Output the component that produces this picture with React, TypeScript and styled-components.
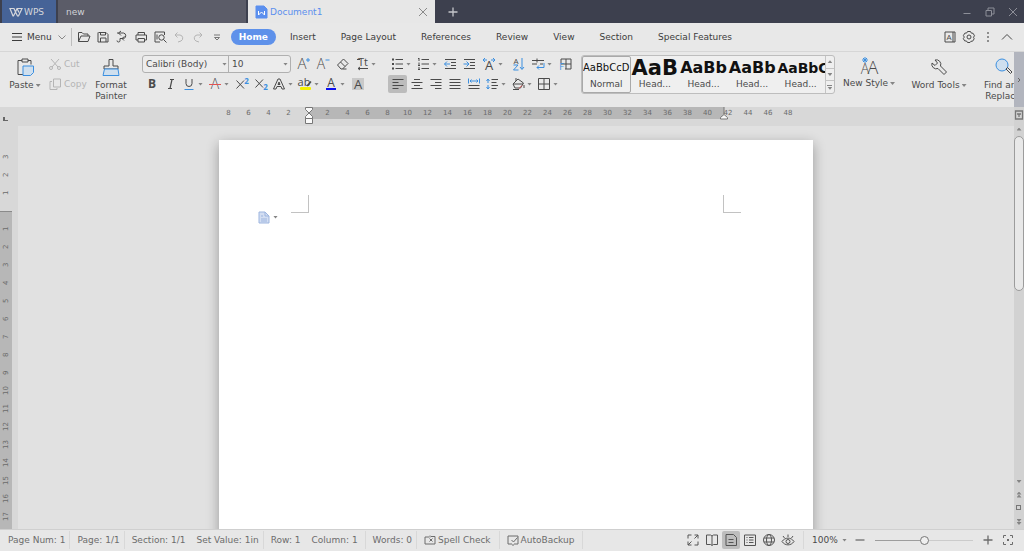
import React from "react";
import styled, { createGlobalStyle, css } from "styled-components";

const UI_FONT = `"DejaVu Sans", sans-serif`;

const GlobalStyle = createGlobalStyle`
  * { box-sizing: border-box; }
  html, body, #root { height: 100%; }
  body {
    margin: 0;
    overflow: hidden;
    background: #e1e1e1;
    color: #4a4a4a;
    font: 9px/12px ${UI_FONT};
  }
  button, select, input { font: inherit; color: inherit; }
`;

/* ---------- shared parts ---------- */

const Window = styled.div`
  display: flex;
  flex-direction: column;
  height: 100vh;
  overflow: hidden;
`;

const PlainButton = styled.button`
  display: inline-flex;
  align-items: center;
  justify-content: center;
  flex: none;
  margin: 0;
  padding: 0;
  border: 0;
  background: none;
  white-space: nowrap;
`;

const Caret = styled.span<{ $up?: boolean }>`
  flex: none;
  width: 5px;
  height: 3px;
  background: #858585;
  clip-path: ${(p) => (p.$up ? "polygon(50% 0, 100% 100%, 0 100%)" : "polygon(0 0, 100% 0, 50% 100%)")};
`;

const Glyph = styled.svg`
  display: block;
  flex: none;
  width: 16px;
  height: 16px;
  overflow: visible;
  fill: none;
  stroke: currentColor;
  stroke-width: 1;

  text {
    stroke: none;
    fill: currentColor;
    text-anchor: middle;
    font-family: "Open Sans", sans-serif;
  }
  .blue { stroke: #3b8fe0; }
  .tint { stroke: #3b8fe0; fill: #cfdfee; }
  text.blue { stroke: none; fill: #3b8fe0; }
  .solid { fill: currentColor; stroke: none; }
`;

const Icon = ({ children }: { children: React.ReactNode }) => (
  <Glyph viewBox="0 0 16 16" aria-hidden="true">
    {children}
  </Glyph>
);

/* ---------- title bar ---------- */

const TitleBar = styled.header`
  display: flex;
  flex: none;
  height: 23px;
  padding-left: 2px;
  background: #3d404e;
  color: #d6d7db;
`;

const BrandTab = styled(PlainButton)`
  justify-content: flex-start;
  width: 54px;
  margin-right: 2px;
  padding-left: 6px;
  background: #466397;
`;

const FileTab = styled.div<{ $active?: boolean }>`
  display: flex;
  align-items: center;
  gap: 1px;
  width: ${(p) => (p.$active ? 187 : 188)}px;
  margin-right: 2px;
  padding: 0 4px 0 ${(p) => (p.$active ? 5 : 8)}px;
  background: ${(p) => (p.$active ? "#e7e7e7" : "#5b5c68")};
  color: ${(p) => (p.$active ? "#5b8fee" : "#d0d1d6")};
`;

const FileName = styled.span`
  flex: 1;
`;

const CloseTab = styled(PlainButton)`
  color: #8a8a8a;
`;

const WindowControls = styled.div`
  display: flex;
  margin-left: auto;
  color: #8d8f98;
`;

const TitleButton = styled(PlainButton)`
  width: 23px;
`;

const NewTabButton = styled(PlainButton)`
  width: 32px;
  color: #c4c5ca;
`;

/* ---------- menu row ---------- */

const MenuRow = styled.nav`
  display: flex;
  align-items: center;
  flex: none;
  height: 29px;
  padding: 0 8px 0 9px;
  border-bottom: 1px solid #d6d6d6;
  background: #e8e8e8;
`;

const MenuButton = styled(PlainButton)`
  gap: 2px;
  margin-right: 1px;
  color: #3c3c3c;
`;

const MenuDivider = styled.span`
  width: 1px;
  height: 18px;
  margin-right: 3px;
  background: #bdbdbd;
`;

const QuickButton = styled(PlainButton)`
  width: 19px;
  height: 18px;
  &:disabled { color: #b4b4b4; }
`;

const TabList = styled.div`
  display: flex;
  align-items: center;
  gap: 1px;
  margin-left: 4px;
`;

const RibbonTab = styled(PlainButton)<{ $active?: boolean }>`
  height: 16px;
  padding: 0 12px;
  color: #3c3c3c;
  ${(p) =>
    p.$active &&
    css`
      padding: 0 8px;
      margin-right: 1px;
      border-radius: 8px;
      background: #5e91ea;
      color: #fff;
      font-weight: bold;
    `}
`;

const MenuTools = styled.div`
  display: flex;
  margin-left: auto;
`;

/* ---------- ribbon ---------- */

const RibbonBar = styled.section`
  display: flex;
  flex: none;
  height: 55px;
  background: #e8e8e8;
`;

const RibbonContent = styled.div`
  display: flex;
  flex: 1;
  min-width: 0;
  overflow: hidden;
  padding: 3px 0 0 6px;
`;

const ScrollRight = styled(PlainButton)`
  width: 10px;
  background: #b2b5be;
`;

const BigButton = styled(PlainButton)<{ $w: number; $low?: boolean }>`
  flex-direction: column;
  justify-content: flex-start;
  gap: ${(p) => (p.$low ? 3 : 2)}px;
  width: ${(p) => p.$w}px;
  padding-top: ${(p) => (p.$low ? 2 : 1)}px;
  line-height: 11px;
`;

const BigGlyph = styled(Glyph)`
  width: 20px;
  height: 20px;
`;

const LabelLine = styled.span`
  display: flex;
  align-items: center;
  gap: 2px;
`;

const ClipColumn = styled.div`
  display: flex;
  flex: none;
  flex-direction: column;
  gap: 2px;
  width: 42px;
  margin-left: 3px;
`;

const ClipButton = styled(PlainButton)`
  justify-content: flex-start;
  gap: 1px;
  height: 18px;
  &:disabled { color: #b5b5b5; }
`;

const ToolGroup = styled.div<{ $mr: number; $ml?: number }>`
  display: flex;
  flex: none;
  flex-direction: column;
  gap: 2px;
  margin-left: ${(p) => p.$ml ?? 0}px;
  margin-right: ${(p) => p.$mr}px;
`;

const ToolRow = styled.div<{ $gap?: number }>`
  display: flex;
  align-items: center;
  gap: ${(p) => p.$gap ?? 0}px;
  height: 18px;
`;

const Cluster = styled.div`
  display: flex;
`;

const ToolButton = styled(PlainButton)<{ $split?: boolean; $on?: boolean }>`
  justify-content: ${(p) => (p.$split ? "flex-start" : "center")};
  gap: 1px;
  width: ${(p) => (p.$split ? 26 : 19)}px;
  height: 18px;
  padding-left: ${(p) => (p.$split ? 1 : 0)}px;
  border-radius: 2px;
  background: ${(p) => (p.$on ? "#bcbcbc" : "none")};
`;

const ComboPair = styled.div`
  display: flex;
  width: 149px;
  height: 18px;
  margin-right: 1px;
  border: 1px solid #b0b0b0;
  border-radius: 3px;
  background: #ececec;
`;

const Combo = styled.label<{ $w: number; $line?: boolean }>`
  display: flex;
  align-items: center;
  width: ${(p) => p.$w}px;
  padding-right: ${(p) => (p.$line ? 1 : 2)}px;
  border-right: ${(p) => (p.$line ? "1px solid #b0b0b0" : "0")};
`;

const Select = styled.select`
  appearance: none;
  flex: 1;
  min-width: 0;
  padding: 0 0 0 3px;
  border: 0;
  background: none;
`;

const Gallery = styled.div`
  display: flex;
  flex: none;
  width: 254px;
  height: 39px;
  margin-right: 6px;
  border: 1px solid #bdbdbd;
  border-radius: 3px;
  background: #efefef;
`;

const StyleItem = styled(PlainButton)<{ $on?: boolean }>`
  flex: 1 1 0;
  flex-direction: column;
  min-width: 0;
  overflow: hidden;
  outline: ${(p) => (p.$on ? "1px solid #a9a9a9" : "none")};
  outline-offset: -1px;
  border-radius: 2px;
`;

const Sample = styled.span<{ $size: number; $bold?: boolean }>`
  display: flex;
  align-items: center;
  align-self: stretch;
  height: 22px;
  padding-left: 1px;
  overflow: hidden;
  color: #111;
  font-size: ${(p) => p.$size}px;
  font-weight: ${(p) => (p.$bold ? "bold" : "normal")};
  line-height: 22px;
`;

const SampleName = styled.span`
  height: 14px;
  line-height: 11px;
`;

const GalleryScroll = styled.div`
  display: flex;
  flex-direction: column;
  width: 9px;
  border-left: 1px solid #c4c4c4;
`;

const GalleryButton = styled(PlainButton)`
  flex: 1;
  flex-direction: column;
  gap: 1px;
  & + & { border-top: 1px solid #c4c4c4; }
`;

const Bar = styled.span`
  width: 5px;
  height: 1px;
  background: #858585;
`;

/* ---------- workspace ---------- */

const Workspace = styled.main`
  display: grid;
  grid-template-columns: 18px 1fr 10px;
  grid-template-rows: 19px 1fr;
  flex: 1;
  min-height: 0;
  background: #d8d8d8;
`;

const Corner = styled.div`
  display: flex;
  align-items: flex-end;
  padding: 0 0 5px 3px;
`;

const TabStop = styled.span`
  width: 5px;
  height: 4px;
  border: solid #666;
  border-width: 0 0 1px 2px;
`;

const HRuler = styled.div`
  display: flex;
  justify-content: center;
  color: #6a6a6a;
  font-size: 7px;
  line-height: 12px;
`;

const HSection = styled.div<{ $w: number; $pad?: number; $dark?: boolean }>`
  position: relative;
  display: flex;
  flex: none;
  width: ${(p) => p.$w}px;
  height: 12px;
  padding-left: ${(p) => p.$pad ?? 0}px;
  background: ${(p) => (p.$dark ? "#b7b7b7" : "none")};
`;

const HMark = styled.span<{ $left?: boolean }>`
  flex: none;
  width: 20px;
  text-align: ${(p) => (p.$left ? "left" : "center")};
`;

const IndentMarks = styled.svg<{ $right?: boolean }>`
  position: absolute;
  top: 0;
  ${(p) => (p.$right ? "right: -4px;" : "left: -4px;")}
  width: 8px;
  height: 18px;
  fill: #fafafa;
  stroke: #777;
`;

const VRuler = styled.div`
  display: flex;
  flex-direction: column;
  min-height: 0;
  overflow: hidden;
  color: #6a6a6a;
  font-size: 7px;
  line-height: 12px;
`;

const VSection = styled.div<{ $dark?: boolean }>`
  display: flex;
  flex: ${(p) => (p.$dark ? "1 0 auto" : "none")};
  flex-direction: column;
  width: 12px;
  padding-top: ${(p) => (p.$dark ? 8 : 22)}px;
  padding-bottom: ${(p) => (p.$dark ? 0 : 9)}px;
  border-top: ${(p) => (p.$dark ? "1px solid #8a8a8a" : "0")};
  background: ${(p) => (p.$dark ? "#b7b7b7" : "none")};
`;

const VMark = styled.span`
  flex: none;
  width: 12px;
  height: 18px;
  text-align: center;
  writing-mode: vertical-rl;
  transform: rotate(180deg);
`;

const Canvas = styled.div`
  display: flex;
  justify-content: center;
  min-height: 0;
  overflow: hidden;
  padding-top: 14px;
  background: #e1e1e1;
`;

const Page = styled.article`
  position: relative;
  display: flex;
  justify-content: space-between;
  flex: none;
  width: 594px;
  height: 840px;
  padding: 55px 72px 0 72px;
  background: #fff;
  box-shadow: 0 4px 12px rgba(0, 0, 0, 0.32);
`;

const CropMark = styled.span<{ $side: "left" | "right" }>`
  width: 18px;
  height: 18px;
  border: solid #c2c2c2;
  border-width: ${(p) => (p.$side === "left" ? "0 1px 1px 0" : "0 0 1px 1px")};
`;

const PasteOptions = styled(PlainButton)`
  position: absolute;
  top: 69px;
  left: 37px;
  gap: 1px;
`;

const ScrollColumn = styled.div`
  display: flex;
  flex-direction: column;
  align-items: center;
  grid-column: 3;
  grid-row: 1 / 3;
  background: #d2d2d2;
  color: #777;
`;

const ScrollButton = styled(PlainButton)<{ $h: number }>`
  flex-direction: column;
  width: 10px;
  height: ${(p) => p.$h}px;
`;

const Thumb = styled.div`
  flex: 0 0 155px;
  width: 10px;
  border: 1px solid #9c9c9c;
  border-radius: 5px;
  background: #e8e8e8;
`;

const ScrollFiller = styled.div`
  flex: 1;
`;

/* ---------- status bar ---------- */

const StatusBar = styled.footer`
  display: flex;
  align-items: center;
  flex: none;
  height: 22px;
  padding: 0 7px 1px 1px;
  border-top: 1px solid #cfcfcf;
  background: #e7e7e7;
  color: #6c6c6c;
`;

const StatusCell = styled.div<{ $tight?: boolean; $tool?: boolean }>`
  display: flex;
  align-items: center;
  flex: none;
  gap: 11px;
  height: 18px;
  padding: 0 ${(p) => (p.$tight ? 4 : p.$tool ? 8 : 7)}px 0 ${(p) => (p.$tool ? 5 : 7)}px;
  border-right: 1px solid #d8d8d8;
  white-space: nowrap;
`;

const ViewGroup = styled.div`
  display: flex;
  gap: 1px;
  margin-left: auto;
  padding-right: 6px;
  border-right: 1px solid #d8d8d8;
  color: #555;
`;

const ViewButton = styled(PlainButton)<{ $on?: boolean }>`
  width: 18px;
  height: 18px;
  border-radius: 2px;
  background: ${(p) => (p.$on ? "#bdbdbd" : "none")};
`;

const ZoomSelect = styled.label`
  display: flex;
  align-items: center;
  width: 47px;
  padding-right: 4px;
  padding-left: 5px;
  color: #4a4a4a;
`;

const ZoomTools = styled.div`
  display: flex;
  align-items: center;
  gap: 2px;
`;

const Slider = styled.input`
  appearance: none;
  width: 98px;
  height: 11px;
  margin: 0 4px;
  background: linear-gradient(90deg, #9d9d9d 50%, #cbcbcb 50%) center / 100% 1px no-repeat;
  &::-webkit-slider-thumb {
    appearance: none;
    width: 9px;
    height: 9px;
    border: 1px solid #777;
    border-radius: 50%;
    background: #efefef;
  }
`;

/* ---------- icons ---------- */

const icons = {
  wps: <path d="M2 4.500h4l1.500 3.500 1.500-3.500h5L10.500 12h-1l-2-4-2 4h-.5zM9 4.500l2 4" strokeWidth="1.200" />,
  doc: (
    <>
      <path d="M3 2h8l3 3v9H3z" fill="#5b8fee" stroke="#5b8fee" />
      <path d="M5.500 7v4l3-3 3 3V7" stroke="#fff" />
    </>
  ),
  close: <path d="M4 4l8 8M12 4l-8 8" />,
  plus: <path d="M3.500 8h9M8 3.500v9" strokeWidth="1.300" />,
  minus: <path d="M3.500 8h9" strokeWidth="1.300" />,
  minimise: <path d="M4.500 9.500h7" />,
  restore: <path d="M4 6.500h5.500V12H4zM6 6V4h6v6h-2" />,
  burger: <path d="M3 4.500h10M3 8h10M3 11.500h10" />,
  chevronDown: <path d="M4.500 6.500L8 10l3.500-3.500" stroke="#888" />,
  chevronUp: <path d="M3 10.500l5-5 5 5" />,
  folder: <path d="M2.500 12.500v-9h3.500l1.500 1.500h4.500v2M2.500 12.500L5 7h9l-2 5.500z" />,
  save: <path d="M3.500 3.500h7.500l2 2v7.500h-10v-9.500M5.500 3.500v2.500h5V3.500M5.500 13V9h5.500v4" />,
  exportDoc: (
    <path d="M3 4h6.500a2.800 2.800 0 0 1 0 5.500H8M7 2l-2.500 2L7 6.500M10.500 7.500L8 9.500l2 2M8 9.500H6v2a1.500 1.500 0 0 1-3 0" />
  ),
  print: <path d="M5 6V3.500h6.500V6M5 11H3V6h10.500v5h-2M5 9.500h6.500v3.500H5z" />,
  preview: (
    <>
      <path d="M12.500 6V3H3v10h5" />
      <circle cx="9.500" cy="8.500" r="2.700" />
      <path d="M11.500 10.500l3 3M5 5.500v5" />
    </>
  ),
  undo: <path d="M6.500 3.500L4 6l2.500 2.500M4 6h5a3.200 3.200 0 0 1 1 6l-3 1" />,
  redo: <path d="M9.500 3.500L12 6 9.500 8.500M12 6H7a3.200 3.200 0 0 0-1 6l3 1" />,
  more: <path d="M5 6h6M5.500 8.500h5L8 11z" stroke="#777" />,
  dictionary: (
    <>
      <path d="M3 3h10v10H3zM11 3v10" />
      <text x="7" y="11" fontSize="8">A</text>
    </>
  ),
  gear: (
    <>
      <circle cx="8" cy="8" r="2" />
      <path d="M6.500 2.500h3l.8 1.600 1.800.2 1.400 2.500-1 1.400.7 1.600-1.600 2.400-1.700.1L9 13.500H6.500l-1-1.500-1.800-.1-1.400-2.300 1-1.500-.9-1.600 1.500-2.400 1.800-.1z" />
    </>
  ),
  dots: (
    <g className="solid">
      <rect x="7.250" y="3.250" width="1.500" height="1.500" />
      <rect x="7.250" y="7.250" width="1.500" height="1.500" />
      <rect x="7.250" y="11.250" width="1.500" height="1.500" />
    </g>
  ),
  cut: (
    <>
      <path d="M4 3l7 8M12 3l-7 8" />
      <circle cx="4" cy="12" r="1.500" />
      <circle cx="12" cy="12" r="1.500" />
    </>
  ),
  copy: <path d="M6.500 3h7v8h-7zM5 5.500H3v8h7v-1.500" />,
  growFont: (
    <>
      <text x="7" y="13" fontSize="15" fontWeight="300">A</text>
      <path className="blue" d="M11 4h4M13 2v4" />
    </>
  ),
  shrinkFont: (
    <>
      <text x="6" y="13" fontSize="14" fontWeight="300">A</text>
      <path className="blue" d="M10.500 4h4" />
    </>
  ),
  eraser: <path d="M2.500 9L8.500 3l4.500 4.500-5.500 5.500H6zM5.500 6l4.500 4.500M7.500 13h4" />,
  phonetic: (
    <>
      <text x="9" y="10" fontSize="11">Tt</text>
      <path d="M3 3.500h3M4 12.500h10M6 11l-2 1.500L6 14" />
    </>
  ),
  bold: <text x="8" y="12" fontSize="12" fontWeight="700">B</text>,
  italic: <path d="M7 3.500h4M5 12.500h4M9 3.500l-2 9" strokeWidth="1.200" />,
  underline: (
    <>
      <path d="M5 3v4.500a3 3 0 0 0 6 0V3" />
      <path className="blue" d="M3.500 13.500h9" />
    </>
  ),
  strike: (
    <>
      <text x="8" y="13" fontSize="14" fontWeight="300">A</text>
      <path d="M2 8.500h12" stroke="#e05252" />
    </>
  ),
  superscript: (
    <>
      <path d="M2.500 4.500l7.500 8M10 4.500l-7.500 8" />
      <text className="blue" x="12.500" y="7.500" fontSize="8" fontWeight="700">2</text>
    </>
  ),
  subscript: (
    <>
      <path d="M2.500 3.500l7.500 8M10 3.500l-7.500 8" />
      <text className="blue" x="12.500" y="14" fontSize="8" fontWeight="700">2</text>
    </>
  ),
  textEffect: <path d="M2.500 13L7 3h2l4.500 10h-2.500l-1-2.500H6L5 13zM7 8.500h2L8 6z" />,
  highlight: (
    <>
      <text x="7" y="10" fontSize="11">ab</text>
      <path d="M10 10l4-4.500" strokeWidth="1.500" />
      <rect x="3" y="11" width="11" height="3" rx="1" fill="#f4f000" stroke="none" />
    </>
  ),
  fontColor: (
    <>
      <text x="8" y="10.500" fontSize="12">A</text>
      <rect x="3" y="12" width="10" height="2" fill="#0c10f0" stroke="none" />
    </>
  ),
  shade: (
    <>
      <rect x="2" y="2" width="12" height="12" fill="#c9c9c9" stroke="none" />
      <text x="8" y="13" fontSize="13">A</text>
    </>
  ),
  bullets: (
    <>
      <path d="M6.500 3.500h7.500M6.500 8h7.500M6.500 12.500h7.500" />
      <path d="M3 3.500h2M3 8h2M3 12.500h2" strokeWidth="2" />
    </>
  ),
  numbers: (
    <>
      <path d="M6.500 3.500h7.500M6.500 8h7.500M6.500 12.500h7.500" />
      <path d="M4 2v3M4 6.500v3M4 11v3M3 2.500h1M3 9.500h2M3 13.500h2" />
    </>
  ),
  outdent: (
    <>
      <path d="M3 3.500h11M9 6.500h5M9 9.500h5M3 12.500h11" />
      <path className="blue" d="M8 8H2.500M5 5.500L2.500 8 5 10.500" />
    </>
  ),
  indent: (
    <>
      <path d="M3 3.500h11M9 6.500h5M9 9.500h5M3 12.500h11" />
      <path className="blue" d="M2.500 8H8M5.500 5.500L8 8l-2.500 2.500" />
    </>
  ),
  charScale: (
    <>
      <text x="8" y="14" fontSize="13">A</text>
      <path className="blue" d="M2 4h4M10 4h4M4 2L2 4l2 2M12 2l2 2-2 2" />
    </>
  ),
  sort: (
    <>
      <text x="6" y="7.500" fontSize="8">A</text>
      <path className="blue" d="M3.500 9h4.500l-4.500 5h5M12 2v11M10 11l2 2.500 2-2.500" />
    </>
  ),
  marks: (
    <>
      <path d="M2 4.500h12M2 8h5M10 8h3M7 2.500v4" />
      <path className="blue" d="M14 7v4.500H7M9 9.500l-2 2 2 2" />
    </>
  ),
  frame: (
    <>
      <path d="M4 7V3h10v10H8M4 8h10M9 3v10" />
      <text className="blue" x="4.500" y="14" fontSize="9">F</text>
    </>
  ),
  left: <path d="M2.500 3.500h11M2.500 6.500h6M2.500 9.500h11M2.500 12.500h6" />,
  center: <path d="M5 3.500h6M2.500 6.500h11M5 9.500h6M2.500 12.500h11" />,
  right: <path d="M2.500 3.500h11M7 6.500h6.500M2.500 9.500h11M7 12.500h6.500" />,
  justify: <path d="M2.500 3.500h11M2.500 6.500h11M2.500 9.500h11M2.500 12.500h11" />,
  distribute: (
    <>
      <path d="M2.500 9.500h11M2.500 12.500h11" />
      <path className="blue" d="M2.500 2.500v5M13.500 2.500v5M4 5h8M5.500 3.500L4 5l1.500 1.500M10.500 3.500L12 5l-1.500 1.500" />
    </>
  ),
  spacing: (
    <>
      <path d="M7.500 3.500h6.500M7.500 6.500h5M7.500 9.500h6.500M7.500 12.500h5" />
      <path className="blue" d="M4 3v4M4 9v4M2.500 5L4 3l1.500 2M2.500 11L4 13l1.500-2" />
    </>
  ),
  bucket: (
    <>
      <path d="M3 8l5-5 5.500 4-3 5H5zM3 8h10M6 5V2M14 9v3" />
      <path d="M3 13.500h6" />
      <path d="M9 12.500l3-3" stroke="#e05252" />
    </>
  ),
  borders: <path d="M2.500 2.500h11v11h-11zM8 2.500v11M2.500 8h11" />,
  pasteTag: (
    <>
      <path d="M3 3h6l4 4v7H3z" fill="#d3def2" stroke="#9db5df" />
      <path d="M9 3v4h4M5 10h6M5 12h6M5 7h2" stroke="#9db5df" />
    </>
  ),
  spell: <path d="M7 5H3v7h10V4.500H9M8 3.500v2M7.500 6.500l3 3M10.500 6.500l-3 3" />,
  backup: <path d="M7 12H3V4h10v8H9M8 12v2M6.500 8l2 2 4-4.500" />,
  expand: <path d="M9.500 3H13v3.500M13 3L9.500 6.500M3 6.500V3h3.500M3 9.500V13h3.500M3 13l3.500-3.500M13 9.500V13H9.500" />,
  book: <path d="M8 4v9M8 4L6.500 3h-4v9.500h4L8 13.500l1.500-1h4V3h-4z" />,
  pageView: <path d="M3 2.500h7.500l3 3v8H3zM5.500 7.500h5M5.500 10.500h5" />,
  outline: <path d="M2.500 3h11v10.500h-11zM4.500 5.500h1M7 5.500h4.500M4.500 8h1M7 8h4.500M4.500 10.500h1M7 10.500h4.500" />,
  globe: (
    <>
      <circle cx="8" cy="8" r="5.500" />
      <ellipse cx="8" cy="8" rx="2.500" ry="5.500" />
      <path d="M3 6h10M3 10h10" />
    </>
  ),
  eye: (
    <>
      <path d="M2 9.500c3-4.500 9-4.500 12 0-3 4.500-9 4.500-12 0zM8 5V2.500M4.500 6L3 4M11.500 6L13 4" />
      <circle cx="8" cy="9.500" r="2" />
    </>
  ),
  fit: (
    <>
      <path d="M3.500 6V3.500H6M10 3.500h2.500V6M12.500 10v2.500H10M6 12.500H3.500V10" />
      <rect className="solid" x="7" y="7" width="2" height="2" />
    </>
  ),
  ribbonNext: <path d="M7 6l2 2-2 2" stroke="#666" />,
  rulerToggle: <path d="M4.500 4h7v8h-7zM6 7h4M8 7v3" strokeWidth="1.300" />,
};

type IconName = keyof typeof icons;

/* ---------- data ---------- */

type Tool = { icon: IconName; label: string; split?: boolean; on?: boolean };

const quickTools: { icon: IconName; label: string; off?: boolean }[] = [
  { icon: "folder", label: "Open" },
  { icon: "save", label: "Save" },
  { icon: "exportDoc", label: "Export to PDF" },
  { icon: "print", label: "Print" },
  { icon: "preview", label: "Print Preview" },
  { icon: "undo", label: "Undo", off: true },
  { icon: "redo", label: "Redo", off: true },
  { icon: "more", label: "Customize" },
];

const ribbonTabs = ["Home", "Insert", "Page Layout", "References", "Review", "View", "Section", "Special Features"];

const fontRow1: Tool[] = [
  { icon: "growFont", label: "Grow Font" },
  { icon: "shrinkFont", label: "Shrink Font" },
  { icon: "eraser", label: "Clear Formatting" },
  { icon: "phonetic", label: "Phonetic Guide", split: true },
];

const fontRow2: Tool[] = [
  { icon: "bold", label: "Bold" },
  { icon: "italic", label: "Italic" },
  { icon: "underline", label: "Underline", split: true },
  { icon: "strike", label: "Strikethrough", split: true },
  { icon: "superscript", label: "Superscript" },
  { icon: "subscript", label: "Subscript" },
  { icon: "textEffect", label: "Text Effect", split: true },
  { icon: "highlight", label: "Highlight", split: true },
  { icon: "fontColor", label: "Font Color", split: true },
  { icon: "shade", label: "Character Shading" },
];

const paragraphClusters: Tool[][] = [
  [
    { icon: "bullets", label: "Bullets", split: true },
    { icon: "numbers", label: "Numbering", split: true },
    { icon: "outdent", label: "Decrease Indent" },
    { icon: "indent", label: "Increase Indent" },
  ],
  [{ icon: "charScale", label: "Character Scaling", split: true }],
  [{ icon: "sort", label: "Sort" }],
  [
    { icon: "marks", label: "Show Marks", split: true },
    { icon: "frame", label: "Frame" },
  ],
];

const paragraphRow2: Tool[] = [
  { icon: "left", label: "Align Left", on: true },
  { icon: "center", label: "Center" },
  { icon: "right", label: "Align Right" },
  { icon: "justify", label: "Justify" },
  { icon: "distribute", label: "Distribute" },
  { icon: "spacing", label: "Line Spacing", split: true },
  { icon: "bucket", label: "Shading", split: true },
  { icon: "borders", label: "Borders", split: true },
];

const styleSamples = [
  { name: "Normal", text: "AaBbCcD", size: 10 },
  { name: "Head...", text: "AaB", size: 21, bold: true },
  { name: "Head...", text: "AaBb", size: 16, bold: true },
  { name: "Head...", text: "AaBb", size: 16, bold: true },
  { name: "Head...", text: "AaBbC", size: 14, bold: true },
];

const views: { icon: IconName; label: string; on?: boolean }[] = [
  { icon: "expand", label: "Full Screen" },
  { icon: "book", label: "Reading Layout" },
  { icon: "pageView", label: "Print Layout", on: true },
  { icon: "outline", label: "Outline" },
  { icon: "globe", label: "Web Layout" },
  { icon: "eye", label: "Eye Protection" },
];

const evens = (from: number, to: number) =>
  Array.from({ length: Math.abs(to - from) / 2 + 1 }, (_, i) => from + (to > from ? 2 * i : -2 * i));

const Tools = ({ items }: { items: Tool[] }) => (
  <>
    {items.map((t) => (
      <ToolButton key={t.label} aria-label={t.label} $split={t.split} $on={t.on}>
        <Icon>{icons[t.icon]}</Icon>
        {t.split && <Caret />}
      </ToolButton>
    ))}
  </>
);

/* ---------- app ---------- */

export default function App() {
  return (
    <Window>
      <GlobalStyle />
      <TitleBar>
        <BrandTab>
          <Icon>{icons.wps}</Icon>
          WPS
        </BrandTab>
        <FileTab>
          <FileName>new</FileName>
        </FileTab>
        <FileTab $active>
          <Icon>{icons.doc}</Icon>
          <FileName>Document1</FileName>
          <CloseTab aria-label="Close tab">
            <Icon>{icons.close}</Icon>
          </CloseTab>
        </FileTab>
        <NewTabButton aria-label="New tab">
          <Icon>{icons.plus}</Icon>
        </NewTabButton>
        <WindowControls>
          <TitleButton aria-label="Minimize"><Icon>{icons.minimise}</Icon></TitleButton>
          <TitleButton aria-label="Restore"><Icon>{icons.restore}</Icon></TitleButton>
          <TitleButton aria-label="Close"><Icon>{icons.close}</Icon></TitleButton>
        </WindowControls>
      </TitleBar>

      <MenuRow>
        <MenuButton>
          <Icon>{icons.burger}</Icon>
          Menu
          <Icon>{icons.chevronDown}</Icon>
        </MenuButton>
        <MenuDivider />
        {quickTools.map((t) => (
          <QuickButton key={t.label} aria-label={t.label} disabled={t.off}>
            <Icon>{icons[t.icon]}</Icon>
          </QuickButton>
        ))}
        <TabList>
          {ribbonTabs.map((t) => (
            <RibbonTab key={t} $active={t === "Home"}>{t}</RibbonTab>
          ))}
        </TabList>
        <MenuTools>
          <QuickButton aria-label="Dictionary"><Icon>{icons.dictionary}</Icon></QuickButton>
          <QuickButton aria-label="Settings"><Icon>{icons.gear}</Icon></QuickButton>
          <QuickButton aria-label="More"><Icon>{icons.dots}</Icon></QuickButton>
          <QuickButton aria-label="Collapse ribbon"><Icon>{icons.chevronUp}</Icon></QuickButton>
        </MenuTools>
      </MenuRow>

      <RibbonBar>
        <RibbonContent>
          <BigButton $w={38} $low>
            <BigGlyph viewBox="0 0 20 20" aria-hidden="true">
              <path d="M7 3.500H3v14h5M13 3.500h3v4M7 2h6v3H7z" />
              <path className="tint" d="M8 9h10.500v6.500l-3 3H8z" />
            </BigGlyph>
            <LabelLine>Paste<Caret /></LabelLine>
          </BigButton>
          <ClipColumn>
            <ClipButton disabled><Icon>{icons.cut}</Icon>Cut</ClipButton>
            <ClipButton disabled><Icon>{icons.copy}</Icon>Copy</ClipButton>
          </ClipColumn>
          <BigButton $w={44} $low>
            <BigGlyph viewBox="0 0 20 20" aria-hidden="true">
              <path d="M8 9V2.500h4V9h5v3H3V9z" />
              <path className="tint" d="M3.500 12h13.500l1 6.500H2z" />
            </BigGlyph>
            <span>Format<br />Painter</span>
          </BigButton>

          <ToolGroup $ml={9} $mr={9}>
            <ToolRow $gap={1}>
              <ComboPair>
                <Combo $w={86} $line>
                  <Select aria-label="Font"><option>Calibri (Body)</option></Select>
                  <Caret />
                </Combo>
                <Combo $w={61}>
                  <Select aria-label="Font size"><option>10</option></Select>
                  <Caret />
                </Combo>
              </ComboPair>
              <Tools items={fontRow1} />
            </ToolRow>
            <ToolRow>
              <Tools items={fontRow2} />
            </ToolRow>
          </ToolGroup>

          <ToolGroup $mr={7}>
            <ToolRow $gap={2}>
              {paragraphClusters.map((c) => (
                <Cluster key={c[0].label}>
                  <Tools items={c} />
                </Cluster>
              ))}
            </ToolRow>
            <ToolRow>
              <Tools items={paragraphRow2} />
            </ToolRow>
          </ToolGroup>

          <Gallery>
            {styleSamples.map((s, i) => (
              <StyleItem key={i} $on={i === 0}>
                <Sample $size={s.size} $bold={s.bold}>{s.text}</Sample>
                <SampleName>{s.name}</SampleName>
              </StyleItem>
            ))}
            <GalleryScroll>
              <GalleryButton aria-label="Previous styles"><Caret $up /></GalleryButton>
              <GalleryButton aria-label="Next styles"><Caret /></GalleryButton>
              <GalleryButton aria-label="All styles"><Bar /><Caret /></GalleryButton>
            </GalleryScroll>
          </Gallery>

          <BigButton $w={56}>
            <BigGlyph viewBox="0 0 20 20" aria-hidden="true">
              <text x="6" y="18" fontSize="14" fontWeight="300">A</text>
              <text x="14" y="18" fontSize="18" fontWeight="300">A</text>
              <path className="blue" d="M6 1v6M3 4h6M4 2l4 4M8 2L4 6" />
            </BigGlyph>
            <LabelLine>New Style<Caret /></LabelLine>
          </BigButton>
          <BigButton $w={84} $low>
            <BigGlyph viewBox="0 0 20 20" aria-hidden="true">
              <path d="M6 3a4.500 4.500 0 0 1 5.500 6l6 6-2.500 2.500-6-6A4.500 4.500 0 0 1 3 6l3 2.500L8.500 6z" />
            </BigGlyph>
            <LabelLine>Word Tools<Caret /></LabelLine>
          </BigButton>
          <BigButton $w={44} $low>
            <BigGlyph viewBox="0 0 20 20" aria-hidden="true">
              <circle className="tint" cx="9" cy="8" r="6" />
              <path d="M13 12l1.500-1.500 4.500 4.500-1.500 1.500z" />
            </BigGlyph>
            <span>Find and<br />Replace</span>
          </BigButton>
        </RibbonContent>
        <ScrollRight aria-label="Scroll ribbon"><Icon>{icons.ribbonNext}</Icon></ScrollRight>
      </RibbonBar>

      <Workspace>
        <Corner><TabStop /></Corner>
        <HRuler>
          <HSection $w={90}>
            {evens(8, 2).map((n) => <HMark key={n}>{n}</HMark>)}
          </HSection>
          <HSection $w={415} $pad={9} $dark>
            {evens(2, 40).map((n) => <HMark key={n}>{n}</HMark>)}
            <IndentMarks viewBox="0 0 8 18" aria-hidden="true">
              <path d="M.5.5h7v2L4 6 .5 2.500zM4 6l3.500 3.500v2h-7v-2zM.5 11.500h7v5h-7z" />
            </IndentMarks>
            <IndentMarks $right viewBox="0 0 8 18" aria-hidden="true">
              <path d="M4 0v7M4 7.500l3.500 3v1.500h-7v-1.500z" />
            </IndentMarks>
          </HSection>
          <HSection $w={90}>
            {evens(42, 48).map((n) => <HMark key={n} $left>{n}</HMark>)}
          </HSection>
        </HRuler>
        <ScrollColumn>
          <ScrollButton $h={15} aria-label="Toggle ruler"><Icon>{icons.rulerToggle}</Icon></ScrollButton>
          <ScrollButton $h={14} aria-label="Scroll up"><Caret $up /></ScrollButton>
          <Thumb />
          <ScrollFiller />
          <ScrollButton $h={13} aria-label="Scroll down"><Caret /></ScrollButton>
          <ScrollButton $h={13} aria-label="Previous page"><Caret $up /><Caret $up /></ScrollButton>
          <ScrollButton $h={14} aria-label="Browse object">
            <Icon><rect x="5.500" y="5.500" width="4" height="4" /></Icon>
          </ScrollButton>
          <ScrollButton $h={14} aria-label="Next page"><Caret /><Caret /></ScrollButton>
        </ScrollColumn>
        <VRuler>
          <VSection>
            {[3, 2, 1].map((n) => <VMark key={n}>{n}</VMark>)}
          </VSection>
          <VSection $dark>
            {Array.from({ length: 17 }, (_, i) => <VMark key={i}>{i + 1}</VMark>)}
          </VSection>
        </VRuler>
        <Canvas>
          <Page>
            <CropMark $side="left" />
            <CropMark $side="right" />
            <PasteOptions aria-label="Paste options">
              <Icon>{icons.pasteTag}</Icon>
              <Caret />
            </PasteOptions>
          </Page>
        </Canvas>
      </Workspace>

      <StatusBar>
        <StatusCell $tight><span>Page Num: 1</span></StatusCell>
        <StatusCell $tight><span>Page: 1/1</span></StatusCell>
        <StatusCell $tight><span>Section: 1/1</span><span>Set Value: 1in</span></StatusCell>
        <StatusCell><span>Row: 1</span><span>Column: 1</span></StatusCell>
        <StatusCell $tight><span>Words: 0</span></StatusCell>
        <StatusCell $tool><PlainButton><Icon>{icons.spell}</Icon>Spell Check</PlainButton></StatusCell>
        <StatusCell $tool><PlainButton><Icon>{icons.backup}</Icon>AutoBackup</PlainButton></StatusCell>
        <ViewGroup>
          {views.map((v) => (
            <ViewButton key={v.label} aria-label={v.label} $on={v.on}>
              <Icon>{icons[v.icon]}</Icon>
            </ViewButton>
          ))}
        </ViewGroup>
        <ZoomSelect>
          <Select aria-label="Zoom level"><option>100%</option></Select>
          <Caret />
        </ZoomSelect>
        <ZoomTools>
          <ViewButton aria-label="Zoom out"><Icon>{icons.minus}</Icon></ViewButton>
          <Slider type="range" aria-label="Zoom" min={0} max={200} defaultValue={100} />
          <ViewButton aria-label="Zoom in"><Icon>{icons.plus}</Icon></ViewButton>
          <ViewButton aria-label="Fit page"><Icon>{icons.fit}</Icon></ViewButton>
        </ZoomTools>
      </StatusBar>
    </Window>
  );
}
